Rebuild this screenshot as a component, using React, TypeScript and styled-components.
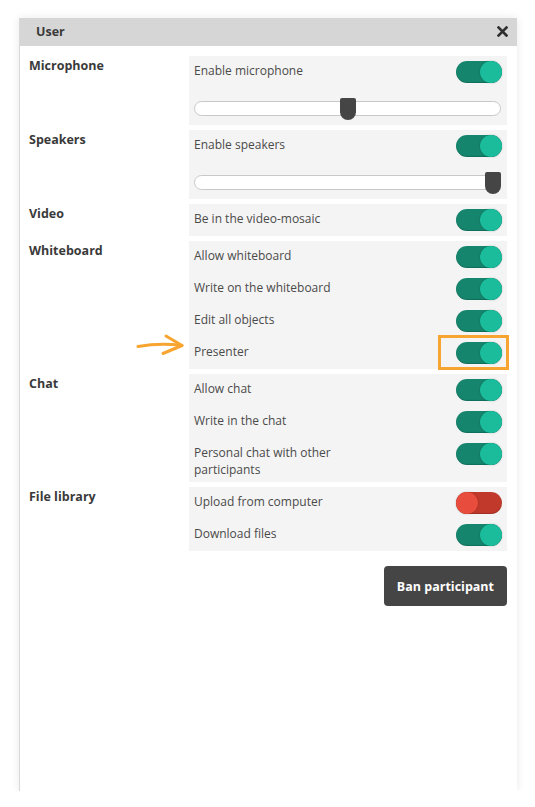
import React from "react";
import styled, { createGlobalStyle } from "styled-components";

const Global = createGlobalStyle`
  html, body { margin: 0; padding: 0; background: #ffffff; }
  body { font-family: "Open Sans", "DejaVu Sans", sans-serif; }
  * { box-sizing: border-box; }
`;

const Page = styled.div`
  padding: 18px 18px 0 19px;
`;

const Dialog = styled.div`
  width: 498px;
  height: 773px;
  background: #ffffff;
  border-left: 1px solid #d9d9d9;
  box-shadow: 0 0 9px rgba(0, 0, 0, 0.09);
  display: flex;
  flex-direction: column;
`;

const Header = styled.div`
  height: 28px;
  background: #d6d6d6;
  display: flex;
  align-items: center;
  justify-content: space-between;
  padding: 0 9px 1px 16px;
`;

const Title = styled.span`
  font-size: 12.5px;
  font-weight: 700;
  color: #3a3a3a;
`;

const CloseButton = styled.button`
  border: 0;
  background: transparent;
  padding: 0;
  width: 12px;
  height: 12px;
  display: flex;
  align-items: center;
  justify-content: center;
  cursor: pointer;
`;

const Body = styled.div`
  padding: 10px 10px 10px 9px;
  display: flex;
  flex-direction: column;
  gap: 5px;
`;

const Section = styled.div`
  display: grid;
  grid-template-columns: 160px 1fr;
`;

const SectionLabel = styled.div`
  font-size: 12.5px;
  font-weight: 700;
  color: #3a3a3a;
  line-height: 17px;
  padding-top: 0.5px;
`;

const Panel = styled.div`
  background: #f4f4f4;
  display: flex;
  flex-direction: column;
`;

const Row = styled.div`
  position: relative;
  display: flex;
  justify-content: space-between;
  align-items: flex-start;
  min-height: 32px;
  padding: 5px 5px 4px 5px;
`;

const RowText = styled.div<{ $narrow?: boolean }>`
  font-size: 12px;
  line-height: 17px;
  padding-top: 1px;
  color: #4a4a4a;
  max-width: ${(p) => (p.$narrow ? "150px" : "none")};
`;

const ToggleTrack = styled.div<{ $on: boolean }>`
  position: relative;
  flex: none;
  width: 46px;
  height: 22px;
  border-radius: 11px;
  background: ${(p) => (p.$on ? "#15866d" : "#c0392b")};
  box-shadow: inset 0 -1px 1px rgba(0, 0, 0, 0.18);
`;

const ToggleKnob = styled.div<{ $on: boolean }>`
  position: absolute;
  top: 0;
  ${(p) => (p.$on ? "right: 0;" : "left: 0;")}
  width: 22px;
  height: 22px;
  border-radius: 50%;
  background: ${(p) => (p.$on ? "#1abc9c" : "#e74c3c")};
  box-shadow: 0 0 2px rgba(0, 0, 0, 0.25);
`;

const SliderRow = styled.div`
  padding: 10px 6px 5px 5px;
`;

const SliderBox = styled.div`
  position: relative;
  height: 22px;
`;

const SliderTrack = styled.div`
  position: absolute;
  left: 0;
  right: 0;
  top: 3px;
  height: 15px;
  border-radius: 8px;
  background: #ffffff;
  border: 1px solid #c8c8c8;
`;

const SliderThumb = styled.div`
  position: absolute;
  top: 0;
  width: 16px;
  height: 22px;
  background: #454545;
  border-radius: 2px 2px 8px 8px;
`;

const Highlight = styled.div`
  position: absolute;
  right: -2px;
  top: -2px;
  width: 71px;
  height: 35px;
  border: 3px solid #f7a530;
  pointer-events: none;
`;

const ArrowMark = styled.svg`
  position: absolute;
  left: -53px;
  top: -5px;
`;

const Footer = styled.div`
  display: flex;
  justify-content: flex-end;
  margin-top: 10px;
`;

const BanButton = styled.button`
  height: 40px;
  padding: 0 13px;
  border: 0;
  border-radius: 4px;
  background: #454545;
  color: #ffffff;
  font-family: "Open Sans", "DejaVu Sans", sans-serif;
  font-size: 12.5px;
  font-weight: 700;
  cursor: pointer;
`;

function Toggle({ on }: { on: boolean }) {
  return (
    <ToggleTrack $on={on}>
      <ToggleKnob $on={on} />
    </ToggleTrack>
  );
}

function Slider({ value }: { value: number }) {
  const [w, setW] = React.useState(307);
  const ref = React.useRef<HTMLDivElement>(null);
  React.useLayoutEffect(() => {
    if (ref.current) setW(ref.current.offsetWidth);
  }, []);
  return (
    <SliderBox ref={ref}>
      <SliderTrack />
      <SliderThumb style={{ left: Math.round((w - 16) * value) }} />
    </SliderBox>
  );
}

type Item = { label: string; on: boolean; highlight?: boolean; narrow?: boolean };

function SettingRow({ item }: { item: Item }) {
  return (
    <Row>
      <RowText $narrow={item.narrow}>{item.label}</RowText>
      <Toggle on={item.on} />
      {item.highlight && (
        <>
          <Highlight />
          <ArrowMark width="50" height="26" viewBox="0 0 50 26">
            <path
              d="M2 14.5 C 14 12.5, 30 11.5, 46 13.5"
              fill="none"
              stroke="#f7a530"
              strokeWidth="3"
              strokeLinecap="round"
            />
            <path
              d="M30 4 L46 13.5 L27 21.5"
              fill="none"
              stroke="#f7a530"
              strokeWidth="3"
              strokeLinecap="round"
              strokeLinejoin="round"
            />
          </ArrowMark>
        </>
      )}
    </Row>
  );
}

const sections: { title: string; items: Item[]; slider?: number }[] = [
  { title: "Microphone", items: [{ label: "Enable microphone", on: true }], slider: 0.5 },
  { title: "Speakers", items: [{ label: "Enable speakers", on: true }], slider: 1 },
  { title: "Video", items: [{ label: "Be in the video-mosaic", on: true }] },
  {
    title: "Whiteboard",
    items: [
      { label: "Allow whiteboard", on: true },
      { label: "Write on the whiteboard", on: true },
      { label: "Edit all objects", on: true },
      { label: "Presenter", on: true, highlight: true },
    ],
  },
  {
    title: "Chat",
    items: [
      { label: "Allow chat", on: true },
      { label: "Write in the chat", on: true },
      { label: "Personal chat with other participants", on: true, narrow: true },
    ],
  },
  {
    title: "File library",
    items: [
      { label: "Upload from computer", on: false },
      { label: "Download files", on: true },
    ],
  },
];

export default function App() {
  return (
    <>
      <Global />
      <Page>
        <Dialog>
          <Header>
            <Title>User</Title>
            <CloseButton aria-label="Close">
              <svg width="11" height="11" viewBox="0 0 11 11">
                <path d="M1.5 1.5 L9.5 9.5 M9.5 1.5 L1.5 9.5" stroke="#2f2f2f" strokeWidth="2.6" strokeLinecap="square" />
              </svg>
            </CloseButton>
          </Header>
          <Body>
            {sections.map((s) => (
              <Section key={s.title}>
                <SectionLabel>{s.title}</SectionLabel>
                <Panel>
                  {s.items.map((it) => (
                    <SettingRow key={it.label} item={it} />
                  ))}
                  {s.slider !== undefined && (
                    <SliderRow>
                      <Slider value={s.slider} />
                    </SliderRow>
                  )}
                </Panel>
              </Section>
            ))}
            <Footer>
              <BanButton>Ban participant</BanButton>
            </Footer>
          </Body>
        </Dialog>
      </Page>
    </>
  );
}
